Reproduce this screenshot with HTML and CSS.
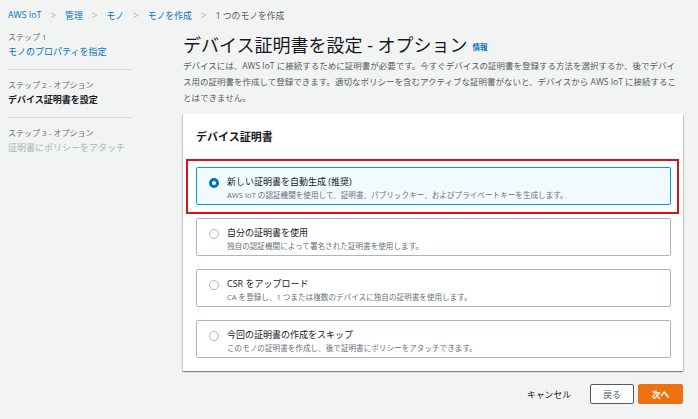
FILE: index.html
```html
<!DOCTYPE html>
<html lang="ja">
<head>
<meta charset="utf-8">
<link rel="stylesheet" href="styles.css">
</head>
<body>
<nav class="crumbs">
  <a class="crumb">AWS IoT</a><span class="sep">&gt;</span>
  <a class="crumb">管理</a><span class="sep">&gt;</span>
  <a class="crumb">モノ</a><span class="sep">&gt;</span>
  <a class="crumb">モノを作成</a><span class="sep">&gt;</span>
  <span class="crumb-current">1 つのモノを作成</span>
</nav>
<div class="layout">
  <aside class="steps">
    <div class="step">
      <div class="step-label">ステップ 1</div>
      <div class="step-title link">モノのプロパティを指定</div>
    </div>
    <div class="step">
      <div class="step-label">ステップ 2 - オプション</div>
      <div class="step-title active">デバイス証明書を設定</div>
    </div>
    <div class="step">
      <div class="step-label">ステップ 3 - オプション</div>
      <div class="step-title disabled">証明書にポリシーをアタッチ</div>
    </div>
  </aside>
  <main class="main">
    <h1 class="title">デバイス証明書を設定 - オプション<span class="info">情報</span></h1>
    <p class="desc">デバイスには、AWS IoT に接続するために証明書が必要です。今すぐデバイスの証明書を登録する方法を選択するか、後でデバイス用の証明書を作成して登録できます。適切なポリシーを含むアクティブな証明書がないと、デバイスから AWS IoT に接続することはできません。</p>
    <section class="card">
      <h2 class="card-title">デバイス証明書</h2>
      <div class="options">
        <div class="option selected">
          <span class="radio on"></span>
          <div class="opt-text">
            <div class="opt-title">新しい証明書を自動生成 (推奨)</div>
            <div class="opt-desc">AWS IoT の認証機関を使用して、証明書、パブリックキー、およびプライベートキーを生成します。</div>
          </div>
          <div class="highlight"></div>
        </div>
        <div class="option">
          <span class="radio"></span>
          <div class="opt-text">
            <div class="opt-title">自分の証明書を使用</div>
            <div class="opt-desc">独自の認証機関によって署名された証明書を使用します。</div>
          </div>
        </div>
        <div class="option">
          <span class="radio"></span>
          <div class="opt-text">
            <div class="opt-title">CSR をアップロード</div>
            <div class="opt-desc">CA を登録し、1 つまたは複数のデバイスに独自の証明書を使用します。</div>
          </div>
        </div>
        <div class="option">
          <span class="radio"></span>
          <div class="opt-text">
            <div class="opt-title">今回の証明書の作成をスキップ</div>
            <div class="opt-desc">このモノの証明書を作成し、後で証明書にポリシーをアタッチできます。</div>
          </div>
        </div>
      </div>
    </section>
    <div class="actions">
      <button class="btn-link">キャンセル</button>
      <button class="btn">戻る</button>
      <button class="btn primary">次へ</button>
    </div>
  </main>
</div>
</body>
</html>
```

FILE: styles.css
```css
* { box-sizing: border-box; }
html, body { margin: 0; padding: 0; }
body {
  width: 698px;
  height: 419px;
  overflow: hidden;
  background: #f2f3f3;
  color: #16191f;
  font-family: "Open Sans", "Noto Sans CJK JP", sans-serif;
  font-size: 9px;
}
.crumbs {
  display: flex;
  align-items: center;
  height: 30px;
  padding: 0 8px;
  font-size: 8.8px;
  gap: 9px;
}
.crumb { color: #0073bb; }
.sep { color: #aab7b8; font-size: 10px; }
.crumb-current { color: #545b64; }

.layout {
  display: flex;
  padding-left: 8px;
  padding-right: 15px;
}
.steps {
  width: 125px;
  flex: none;
  margin-right: 50px;
}
.step {
  padding: 0 0 9px;
  border-bottom: 1px solid #d5dbdb;
  margin-bottom: 8px;
}
.step:last-child { border-bottom: none; }
.step-label {
  font-size: 8px;
  color: #687078;
  line-height: 14px;
}
.step-title {
  font-size: 9px;
  line-height: 16px;
}
.step-title.link { color: #0073bb; }
.step-title.active { font-weight: bold; color: #16191f; }
.step-title.disabled { color: #aab7b8; }

.main { flex: 1; min-width: 0; }
.title {
  margin: 4px 0 0;
  font-size: 18px;
  font-weight: normal;
  line-height: 22px;
  color: #16191f;
}
.info {
  margin-left: 5px;
  font-size: 7.5px;
  font-weight: bold;
  color: #0073bb;
  vertical-align: middle;
}
.desc {
  margin: 0;
  color: #545b64;
  font-size: 8.5px;
  line-height: 16px;
}
.card {
  margin-top: 8px;
  background: #fff;
  box-shadow: 0 1px 1px 0 rgba(0, 28, 36, 0.3), 1px 1px 1px 0 rgba(0, 28, 36, 0.15), -1px 1px 1px 0 rgba(0, 28, 36, 0.15);
  padding: 15px 12px 13px 13px;
}
.card-title {
  margin: 0 0 22px;
  font-size: 11px;
  font-weight: bold;
  line-height: 16px;
}
.options {
  display: flex;
  flex-direction: column;
  gap: 13px;
}
.option {
  position: relative;
  display: flex;
  align-items: flex-start;
  height: 38px;
  padding: 7px 12px;
  border: 1px solid #aab7b8;
  border-radius: 2px;
  background: #fff;
}
.option.selected {
  background: #f1faff;
  border-color: #00a1c9;
}
.radio {
  flex: none;
  width: 10px;
  height: 10px;
  margin-top: 3px;
  margin-right: 8px;
  border: 1px solid #aab7b8;
  border-radius: 50%;
  background: #fff;
}
.radio.on {
  border: 3px solid #0073bb;
}
.opt-text { min-width: 0; }
.opt-title {
  font-size: 9px;
  line-height: 14px;
  color: #16191f;
}
.opt-desc {
  font-size: 7.6px;
  line-height: 12px;
  color: #687078;
}
.highlight {
  position: absolute;
  left: -11px;
  right: -9px;
  top: -9px;
  bottom: -10px;
  border: 2px solid #d0161b;
  pointer-events: none;
}
.actions {
  display: flex;
  justify-content: flex-end;
  align-items: center;
  gap: 4px;
  margin-top: 13px;
}
.btn-link {
  border: none;
  background: none;
  font: inherit;
  font-size: 8.8px;
  color: #16191f;
  padding: 0 15px 0 0;
  height: 20px;
}
.btn {
  font: inherit;
  font-size: 8.8px;
  height: 20px;
  width: 44px;
  padding: 0;
  border: 1px solid #545b64;
  background: #fff;
  color: #545b64;
  border-radius: 2px;
}
.btn.primary {
  background: #ec7211;
  border-color: #ec7211;
  color: #fff;
  font-weight: bold;
  width: 45px;
}
```
